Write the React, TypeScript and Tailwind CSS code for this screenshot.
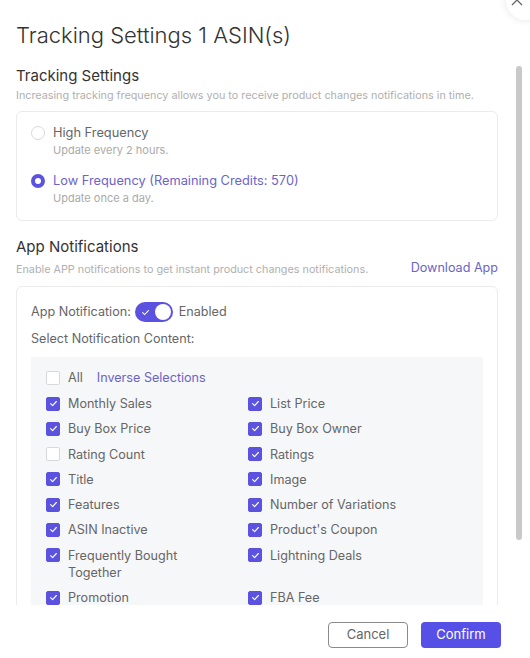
import { useState } from 'react';

const FONT = { fontFamily: 'Inter, "Noto Sans", "Liberation Sans", sans-serif' };

type Item = { label: string; checked: boolean };

const LEFT: Item[] = [
  { label: 'Monthly Sales', checked: true },
  { label: 'Buy Box Price', checked: true },
  { label: 'Rating Count', checked: false },
  { label: 'Title', checked: true },
  { label: 'Features', checked: true },
  { label: 'ASIN Inactive', checked: true },
  { label: 'Frequently Bought Together', checked: true },
  { label: 'Promotion', checked: true },
];

const RIGHT: Item[] = [
  { label: 'List Price', checked: true },
  { label: 'Buy Box Owner', checked: true },
  { label: 'Ratings', checked: true },
  { label: 'Image', checked: true },
  { label: 'Number of Variations', checked: true },
  { label: "Product's Coupon", checked: true },
  { label: 'Lightning Deals', checked: true },
  { label: 'FBA Fee', checked: true },
];

function Check({ on }: { on: boolean }) {
  return (
    <span
      className={`mt-[1.5px] flex h-[14px] w-[14px] shrink-0 items-center justify-center rounded-[2px] border ${
        on ? 'border-[#5b52e0] bg-[#5b52e0]' : 'border-[#d9d9d9] bg-white'
      }`}
    >
      {on && (
        <svg width="9" height="9" viewBox="0 0 10 10" fill="none">
          <path d="M1.8 5.2 4 7.3 8.2 2.8" stroke="white" strokeWidth="1.3" strokeLinecap="round" strokeLinejoin="round" />
        </svg>
      )}
    </span>
  );
}

function CheckRow({ item, narrow }: { item: Item; narrow?: boolean }) {
  return (
    <div className="flex items-start gap-[8px]">
      <Check on={item.checked} />
      <span className={`text-[12.6px] leading-[17px] text-[#666] ${narrow ? 'max-w-[150px]' : ''}`}>
        {item.label}
      </span>
    </div>
  );
}

export default function App() {
  const [freq, setFreq] = useState<'high' | 'low'>('low');
  const [enabled, setEnabled] = useState(true);

  const rows = LEFT.map((l, i) => [l, RIGHT[i]] as const);

  return (
    <div className="relative flex h-[658px] w-[530px] flex-col overflow-hidden bg-white" style={FONT}>
      <button className="absolute -right-[16px] -top-[20px] flex h-[40px] w-[40px] items-end justify-start rounded-full bg-white pb-[14px] pl-[5px] shadow-[0_0_8px_rgba(0,0,0,0.1)]">
        <svg width="12" height="12" viewBox="0 0 12 12" stroke="#666" strokeWidth="1.3">
          <path d="M1 1l10 10M11 1 1 11" />
        </svg>
      </button>

      <div className="px-[16px] pt-[20px] text-[22px] font-light leading-[30px] text-[#333]">
        Tracking Settings 1 ASIN(s)
      </div>

      <div className="mt-[12px] flex min-h-0 flex-1">
        <div className="min-h-0 w-[498px] overflow-hidden pl-[16px] pt-[3px]">
          <div className="text-[15px] leading-[22px] text-[#333]">Tracking Settings</div>
          <div className="mt-[1px] text-[10.8px] leading-[16px] text-[#b0b0b0]">
            Increasing tracking frequency allows you to receive product changes notifications in time.
          </div>

          <div className="mt-[7px] rounded-[6px] border border-[#ebebeb] px-[14px] pb-[14px] pt-[12px]">
            <label className="flex cursor-pointer items-start gap-[8px]" onClick={() => setFreq('high')}>
              <span
                className={`mt-[2px] h-[14px] w-[14px] shrink-0 rounded-full ${
                  freq === 'high' ? 'border-[4px] border-[#5b52e0]' : 'border border-[#d9d9d9]'
                }`}
              />
              <span>
                <div className={`text-[12.8px] leading-[18px] ${freq === 'high' ? 'text-[#6b63c9]' : 'text-[#666]'}`}>
                  High Frequency
                </div>
                <div className="mt-[1px] text-[11px] leading-[15px] text-[#aaa]">Update every 2 hours.</div>
              </span>
            </label>
            <label className="mt-[14px] flex cursor-pointer items-start gap-[8px]" onClick={() => setFreq('low')}>
              <span
                className={`mt-[2px] h-[14px] w-[14px] shrink-0 rounded-full ${
                  freq === 'low' ? 'border-[4px] border-[#5b52e0]' : 'border border-[#d9d9d9]'
                }`}
              />
              <span>
                <div className={`text-[12.8px] leading-[18px] ${freq === 'low' ? 'text-[#6b63c9]' : 'text-[#666]'}`}>
                  Low Frequency (Remaining Credits: 570)
                </div>
                <div className="mt-[1px] text-[11px] leading-[15px] text-[#aaa]">Update once a day.</div>
              </span>
            </label>
          </div>

          <div className="mt-[15px] text-[15px] leading-[22px] text-[#333]">App Notifications</div>
          <div className="mt-[1px] flex items-end justify-between">
            <span className="text-[10.8px] leading-[16px] text-[#b0b0b0]">
              Enable APP notifications to get instant product changes notifications.
            </span>
            <a className="mb-[1px] text-[12.6px] leading-[18px] text-[#6b64c6]">Download App</a>
          </div>

          <div className="mt-[8px] rounded-[6px] border border-[#ebebeb] px-[14px] pt-[15px]">
            <div className="flex items-center text-[12.6px] leading-[18px] text-[#666]">
              <span>App Notification:</span>
              <button
                onClick={() => setEnabled(!enabled)}
                className={`ml-[4px] flex h-[20px] w-[38px] items-center rounded-full px-[2px] ${
                  enabled ? 'justify-end bg-[#5b52e0]' : 'justify-start bg-[#ccc]'
                }`}
              >
                {enabled && (
                  <svg className="mr-[5px]" width="9" height="9" viewBox="0 0 10 10" fill="none">
                    <path d="M1.8 5.2 4 7.3 8.2 2.8" stroke="white" strokeWidth="1.2" strokeLinecap="round" />
                  </svg>
                )}
                <span className="h-[16px] w-[16px] rounded-full bg-white" />
              </button>
              <span className="ml-[6px]">{enabled ? 'Enabled' : 'Disabled'}</span>
            </div>
            <div className="mt-[8px] text-[12.6px] leading-[18px] text-[#666]">Select Notification Content:</div>

            <div className="mt-[9px] bg-[#f6f7f9] pb-[12px] pl-[15px] pt-[12px]">
              <div className="flex items-start gap-[8px]">
                <Check on={false} />
                <span className="text-[12.6px] leading-[18px] text-[#666]">All</span>
                <span className="ml-[6px] text-[12.6px] leading-[18px] text-[#6b64c6]">Inverse Selections</span>
              </div>
              <div className="mt-[8px] grid grid-cols-[202px_1fr] gap-y-[8.3px]">
                {rows.map(([l, r]) => (
                  <div key={l.label} className="contents">
                    <CheckRow item={l} narrow />
                    <CheckRow item={r} />
                  </div>
                ))}
              </div>
            </div>
          </div>
        </div>

        <div className="ml-[18px] w-[6px] pt-[4px]">
          <div className="h-[474px] w-[6px] rounded-full bg-[#c9c9c9]" />
        </div>
      </div>

      <div className="flex h-[53px] shrink-0 items-start justify-end gap-[13px] pr-[29px] pt-[17px]">
        <button className="h-[26px] w-[80px] rounded-[4px] border border-[#8a8a8a] bg-white text-[13px] text-[#666]">
          Cancel
        </button>
        <button className="h-[26px] w-[80px] rounded-[4px] bg-[#5750e6] text-[13px] text-white">Confirm</button>
      </div>
    </div>
  );
}
